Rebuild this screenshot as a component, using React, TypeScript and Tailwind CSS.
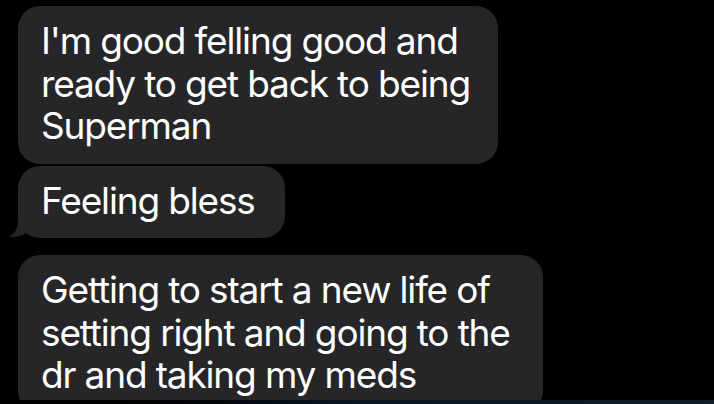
export default function App() {
  const font = { fontFamily: 'Inter, "Noto Sans", sans-serif' };

  return (
    <div className="w-[714px] h-[404px] bg-black overflow-hidden flex flex-col" style={font}>
      <div className="h-[400px] overflow-hidden pl-[18px] pt-[6px] flex flex-col">
        {/* first bubble */}
        <div className="w-[480px] bg-[#262628] rounded-[22px] pl-[23px] pt-[14px] pb-[16px] text-white text-[37px] leading-[42.5px] tracking-[-1.15px] whitespace-nowrap">
          I'm good felling good and
          <br />
          ready to get back to being
          <br />
          Superman
        </div>

        {/* second bubble with tail */}
        <div className="relative mt-[2px] w-[267px]">
          <div className="bg-[#262628] rounded-[22px] pl-[23px] pt-[14px] pb-[16px] text-white text-[37px] leading-[42.5px] tracking-[-1.15px] whitespace-nowrap">
            Feeling bless
          </div>
          <svg className="absolute left-[-10px] bottom-0" width="34" height="26" viewBox="8 213 34 26">
            <path
              d="M18 213 L18 223 C18 230 14.5 235 9 237.6 C15.5 238.6 22.5 237 27.5 233.5 C30 235.5 33 237 36 238 L42 238 L42 213 Z"
              fill="#262628"
            />
          </svg>
        </div>

        {/* third bubble, cut off */}
        <div className="mt-[17px] w-[525px] bg-[#262628] rounded-[22px] pl-[23px] pt-[14px] pb-[16px] text-white text-[37px] leading-[42.5px] tracking-[-1.15px] whitespace-nowrap shrink-0">
          Getting to start a new life of
          <br />
          setting right and going to the
          <br />
          dr and taking my meds
        </div>
      </div>
      <div className="h-[4px] bg-gradient-to-r from-black via-[#0b1620] to-[#0f1d28]" />
    </div>
  );
}
